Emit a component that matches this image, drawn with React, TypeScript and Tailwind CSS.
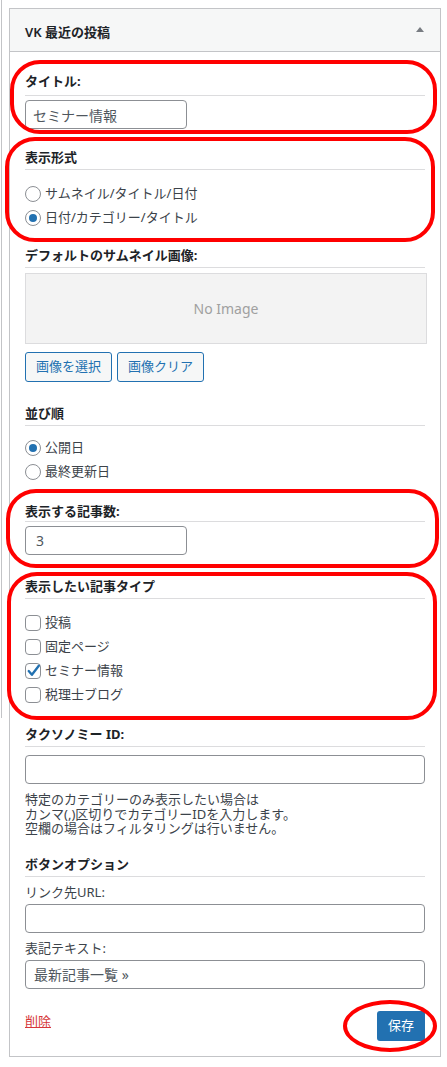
import React from 'react';

interface ChildProps {
  children: React.ReactNode;
  className?: string;
}

// Section heading with the thin rule below it
const Heading = ({ children, className = '' }: ChildProps) => (
  <div className={`border-b border-[#dcdcde] text-[13px] leading-[18px] font-bold text-[#1d2327] ${className}`}>
    {children}
  </div>
);

const Radio = ({ label, checked }: { label: string; checked?: boolean }) => (
  <label className="flex h-6 items-center gap-[4px] text-[13px] text-[#3c434a]">
    <span className="flex h-4 w-4 items-center justify-center rounded-full border border-[#8c8f94] bg-white">
      {checked && <span className="h-2 w-2 rounded-full bg-[#2271b1]" />}
    </span>
    {label}
  </label>
);

const Checkbox = ({ label, checked }: { label: string; checked?: boolean }) => (
  <label className="flex h-6 items-center gap-[4px] text-[13px] text-[#3c434a]">
    <span className="relative flex h-4 w-4 items-center justify-center rounded-[4px] border border-[#8c8f94] bg-white">
      {checked && (
        <svg viewBox="0 0 16 16" className="absolute -left-px -top-[2px] h-[17px] w-[17px]">
          <path d="M3.5 8.5 L6.5 12 L13 3.5" fill="none" stroke="#2271b1" strokeWidth="2.2" strokeLinecap="round" strokeLinejoin="round" />
        </svg>
      )}
    </span>
    {label}
  </label>
);

const TextInput = ({ value, className = '' }: { value?: string; className?: string }) => (
  <input
    readOnly
    value={value ?? ''}
    className={`block h-[29px] rounded-[4px] border border-[#8c8f94] bg-white text-[14px] text-[#50575e] outline-none ${className}`}
  />
);

const Oval = ({ className = '' }: { className?: string }) => (
  <div className={`pointer-events-none absolute border-4 border-[#ff0000] ${className}`} />
);

const App = () => {
  return (
    <div className="relative min-h-[1067px] w-[447px] bg-white font-['Noto_Sans','Noto_Sans_CJK_JP',sans-serif]">
      <div className="flex">
        <div className="ml-px h-[718px] w-px bg-[#c3c4c7]" />

        {/* Widget box */}
        <div className="ml-[7px] mt-2 w-[432px] border border-[#c3c4c7] bg-white">
          <div className="flex h-[43px] items-center justify-between border-b border-[#c3c4c7] bg-[#f6f7f7] pl-[15px] pr-[16px]">
            <span className="mt-[3px] text-[13px] leading-[20px] font-semibold text-[#1d2327]">VK 最近の投稿</span>
            <svg width="8" height="5" viewBox="0 0 8 5" className="-mt-[2px]">
              <polygon points="0,5 8,5 4,0" fill="#787c82" />
            </svg>
          </div>

          <div className="px-[15px] pb-[15px]">
            <Heading className="mt-[20px] pb-[5px]">タイトル:</Heading>
            <TextInput value="セミナー情報" className="mt-[4px] w-[162px] px-[7px]" />

            <Heading className="mt-[19px] pb-[3px]">表示形式</Heading>
            <div className="mt-[12px]">
              <Radio label="サムネイル/タイトル/日付" />
              <Radio label="日付/カテゴリー/タイトル" checked />
            </div>

            <Heading className="mt-[16px] pb-[3px]">デフォルトのサムネイル画像:</Heading>
            <div className="mt-[5px] flex h-[71px] w-[402px] items-center justify-center border border-[#dcdcde] bg-[#f3f3f3] text-[14px] text-[#a0a0a0]">
              No Image
            </div>
            <div className="mt-[8px] flex gap-[5px]">
              <button className="h-[30px] rounded-[3px] border border-[#2271b1] bg-[#f6f7f7] px-[10px] text-[13px] text-[#2271b1]">画像を選択</button>
              <button className="h-[30px] rounded-[3px] border border-[#2271b1] bg-[#f6f7f7] px-[10px] text-[13px] text-[#2271b1]">画像クリア</button>
            </div>

            <Heading className="mt-[22px] pb-[3px]">並び順</Heading>
            <div className="mt-[10px]">
              <Radio label="公開日" checked />
              <Radio label="最終更新日" />
            </div>

            <Heading className="mt-[18px] pb-[1px]">表示する記事数:</Heading>
            <TextInput value="3" className="mt-[4px] w-[162px] px-[10px]" />

            <Heading className="mt-[22px] pb-[3px]">表示したい記事タイプ</Heading>
            <div className="mt-[12px]">
              <Checkbox label="投稿" />
              <Checkbox label="固定ページ" />
              <Checkbox label="セミナー情報" checked />
              <Checkbox label="税理士ブログ" />
            </div>

            <Heading className="mt-[18px] pb-[3px]">タクソノミー ID:</Heading>
            <TextInput className="mt-[8px] w-full px-[8px]" />
            <p className="mt-[8px] text-[13px] leading-[14.5px] text-[#3c434a]">
              特定のカテゴリーのみ表示したい場合は
              <br />
              カンマ(,)区切りでカテゴリーIDを入力します。
              <br />
              空欄の場合はフィルタリングは行いません。
            </p>

            <Heading className="mt-[19px] pb-[3px]">ボタンオプション</Heading>
            <div className="mt-[6px] text-[13px] leading-[18px] text-[#3c434a]">リンク先URL:</div>
            <TextInput className="mt-[3px] w-full px-[8px]" />
            <div className="mt-[6px] text-[13px] leading-[18px] text-[#3c434a]">表記テキスト:</div>
            <TextInput value="最新記事一覧 »" className="mt-[3px] w-full px-[8px]" />

            <div className="mt-[22px] flex items-start justify-between">
              <a href="#" className="mt-px text-[13px] leading-[18px] text-[#d63638] underline">削除</a>
              <button className="h-[30px] rounded-[3px] bg-[#2271b1] px-[11px] text-[13px] text-white">保存</button>
            </div>
          </div>
        </div>
      </div>

      {/* Red annotation marks */}
      <Oval className="left-[10px] top-[60px] h-[74px] w-[427px] rounded-[30px]" />
      <Oval className="left-[5px] top-[137px] h-[105px] w-[430px] rounded-[30px]" />
      <Oval className="left-[6px] top-[489px] h-[79px] w-[433px] rounded-[30px]" />
      <Oval className="left-[7px] top-[572px] h-[148px] w-[430px] rounded-[30px]" />
      <Oval className="left-[343px] top-[1000px] h-[52px] w-[94px] rounded-[50%]" />
    </div>
  );
};

export default App;
